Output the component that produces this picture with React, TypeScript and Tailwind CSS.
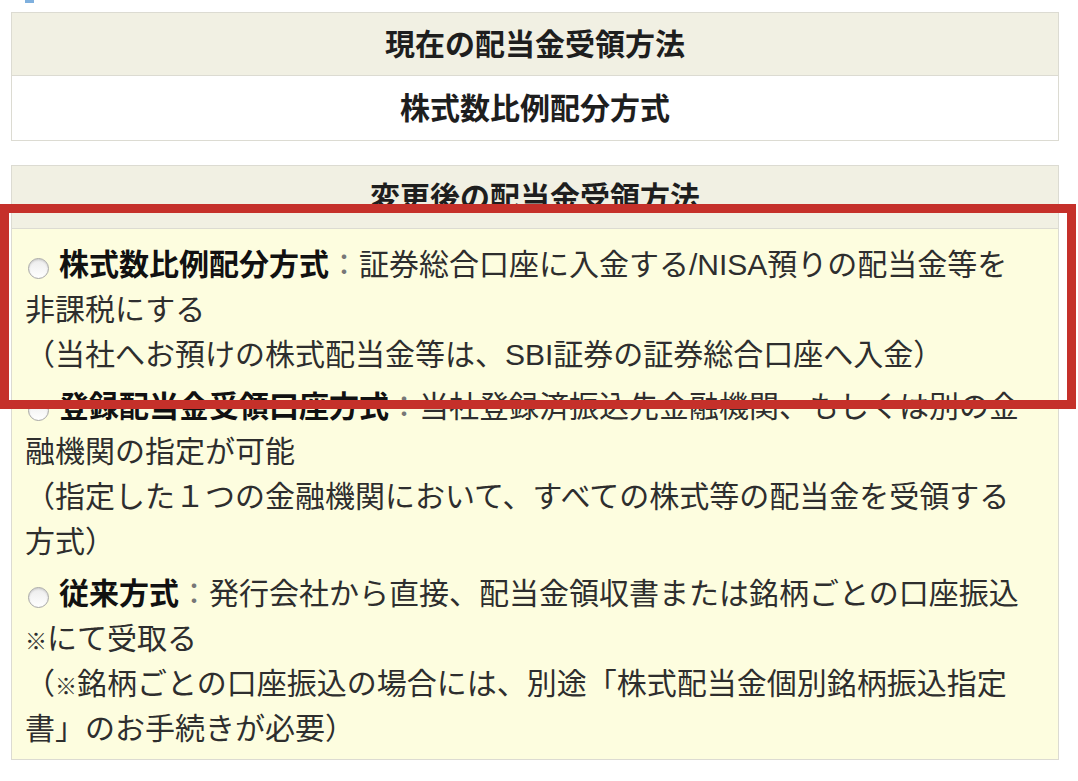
import React from "react";

function Radio() {
  return (
    <span className="inline-block w-[21px] h-[21px] rounded-full border-[1.5px] border-[#a8a8a8] bg-gradient-to-b from-[#ececec] to-white ml-[3px] mr-[10px] align-[-4px] shadow-[inset_0_1px_2px_rgba(0,0,0,0.15)]" />
  );
}

function Kome() {
  return <span className="text-[22px] leading-[0]">※</span>;
}

export default function App() {
  return (
    <div className="relative w-[1078px] h-[781px] bg-white overflow-hidden font-['Liberation_Sans','Noto_Sans_CJK_JP',sans-serif] text-[#2e2e2e]">
      <div className="h-[12px] pl-[25px]">
        <div className="w-[9px] h-[3px] bg-[#7fb0de]" />
      </div>
      <div className="px-[11px] w-[1070px]">
        <div className="border border-[#dcdbd2]">
          <div className="h-[63px] flex items-center justify-center bg-[#f1f0e3] border-b border-[#dcdbd2] text-[30px] font-bold text-[#1e1e1e]">
            現在の配当金受領方法
          </div>
          <div className="h-[64px] flex items-center justify-center bg-white text-[30px] font-bold text-[#1e1e1e]">
            株式数比例配分方式
          </div>
        </div>

        <div className="mt-[24px] border border-[#dcdbd2]">
          <div className="h-[63px] flex items-center justify-center bg-[#f1f0e3] border-b border-[#dcdbd2] text-[30px] font-bold text-[#1e1e1e]">
            変更後の配当金受領方法
          </div>
          <div className="bg-[#fdfddf] pt-[13px] pb-[8px] pl-[13px] pr-[26px] text-[30px] leading-[45px] flex flex-col gap-[7px]">
            <div>
              <Radio />
              <b className="text-[#111]">株式数比例配分方式</b>
              <span className="text-[#777]">：</span>証券総合口座に入金する/NISA預りの配当金等を非課税にする
              <br />
              （当社へお預けの株式配当金等は、SBI証券の証券総合口座へ入金）
            </div>
            <div>
              <Radio />
              <b className="text-[#111]">登録配当金受領口座方式</b>
              <span className="text-[#777]">：</span>当社登録済振込先金融機関、もしくは別の金融機関の指定が可能
              <br />
              （指定した１つの金融機関において、すべての株式等の配当金を受領する方式）
            </div>
            <div>
              <Radio />
              <b className="text-[#111]">従来方式</b>
              <span className="text-[#777]">：</span>発行会社から直接、配当金領収書または銘柄ごとの口座振込<Kome />にて受取る
              <br />
              （<Kome />銘柄ごとの口座振込の場合には、別途「株式配当金個別銘柄振込指定書」のお手続きが必要）
            </div>
          </div>
        </div>
      </div>

      <div className="absolute left-0 top-[204px] w-[1076px] h-[205px] border-[9px] border-[#c5302a] pointer-events-none" />
    </div>
  );
}
